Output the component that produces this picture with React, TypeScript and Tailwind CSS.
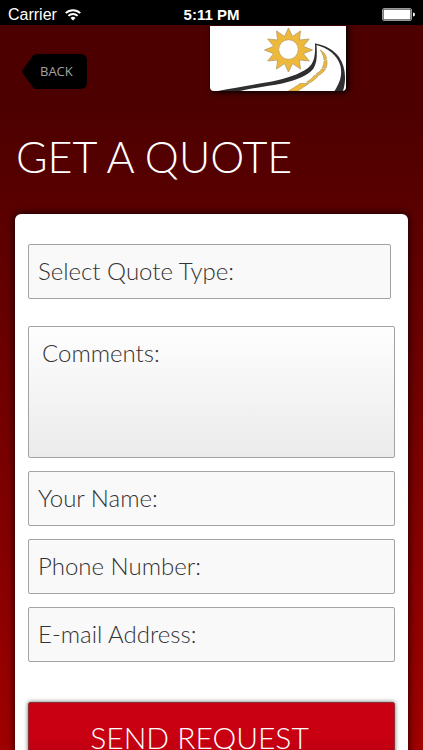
import { useState } from 'react';
import type { FormEvent } from 'react';

const quoteTypes = ['Residential', 'Commercial', 'Paving', 'Other'];

const contactFields = [
  { id: 'name', label: 'Your Name:', type: 'text' },
  { id: 'phone', label: 'Phone Number:', type: 'tel' },
  { id: 'email', label: 'E-mail Address:', type: 'email' },
];

const fieldClass =
  'block w-full rounded-xs border border-[#a3a3a3] text-2xl font-light text-[#333] placeholder:text-[#333] placeholder:opacity-100';

function WifiIcon() {
  return (
    <svg viewBox="0 0 16 12" className="h-3 w-4" fill="none" stroke="white" strokeWidth="1.9">
      <path d="M0.8 4.2a10.2 10.2 0 0 1 14.4 0" />
      <path d="M3.4 6.9a6.5 6.5 0 0 1 9.2 0" />
      <path d="M8 11.6 5.5 9.1a3.5 3.5 0 0 1 5 0z" fill="white" stroke="none" />
    </svg>
  );
}

function StatusBar() {
  return (
    <div className="grid h-[25px] shrink-0 grid-cols-3 items-center bg-black px-2 pt-1 font-['Liberation_Sans',sans-serif] text-base leading-5 text-white">
      <div className="flex items-center gap-2">
        <span>Carrier</span>
        <WifiIcon />
      </div>
      <span className="text-center text-[15px] font-bold">5:11 PM</span>
      <svg viewBox="0 0 33 14" className="h-3.5 w-[33px] justify-self-end">
        <rect x="0.5" y="0.5" width="29" height="12" rx="1.5" fill="none" stroke="#999" />
        <rect x="1.5" y="1.5" width="27" height="10" rx="0.5" fill="white" />
        <path d="M31 4.5a2 2 0 0 1 0 4z" fill="white" />
      </svg>
    </div>
  );
}

// Sun rising over a winding road
function Logo() {
  const rays = Array.from({ length: 24 }, (_, i) => {
    const angle = (i * Math.PI) / 12;
    const r = i % 2 === 0 ? 1 : 0.64;
    return `${78.5 + Math.sin(angle) * 24 * r},${24 - Math.cos(angle) * 22 * r}`;
  }).join(' ');

  return (
    <svg
      viewBox="0 0 136 65"
      className="mt-px h-[65px] w-[136px] rounded-b-sm bg-white shadow-[2px_1px_5px_1px_rgba(0,0,0,0.8)]"
      role="img"
      aria-label="Logo"
    >
      <polygon points={rays} fill="#eeb93a" stroke="#b59a63" strokeWidth="0.8" />
      <circle cx="78.5" cy="23.5" r="9.8" fill="white" stroke="#b59a63" strokeWidth="0.7" />
      <g fill="#2f2f31">
        <path d="M105 17.5C105.500 30 104 37 98 42C88 49 77 52 62 55.500C42 59 24 62 8 65H30C45 61.500 60 60 72 57.500C88 53.500 99 49 103.500 42.500C107.500 36 107 28 106.500 18Z" />
        <path d="M105 17.5C115 19 124 24 129 31C135 40 137 52 133 65H124.500C129.500 57 132.500 50 130.500 40C127.500 30 119 22 105.500 18.800Z" />
      </g>
      <g fill="#eeb93a" stroke="#a88b50" strokeWidth="0.6">
        <path d="M110 24C112.500 27 113.500 30 114 34L116.500 33C116.500 29.500 114 26 110 24Z" />
        <path d="M114 35.200L116.800 34.200C117.300 37 117 39.500 116 42L112.300 41.500C113.500 39.500 114 37.500 114 35.200Z" />
        <path d="M111.700 42.800L115.500 43C114 45.500 112 47 109.500 49L106 48C108.500 46.500 110.500 45 111.700 42.800Z" />
        <path d="M104.500 49.200L108.500 49.800C106 52.500 103.500 54.500 100.500 56.500L96.500 56C99.500 54.500 102.500 52 104.500 49.200Z" />
        <path d="M90 57.500H99C95 60 91 62.500 88 65H78.500C83 62 87 60 90 57.500Z" />
      </g>
    </svg>
  );
}

function BackButton() {
  return (
    <button
      type="button"
      className="mt-[29px] flex h-[35px] items-stretch font-['Open_Sans',sans-serif] text-[13px] text-[#a3a3a3]"
    >
      <svg viewBox="0 0 14 35" className="h-full w-3.5" fill="black">
        <path d="M15 0H14Q12.500 0 11 1.500L1 15.500Q-0.500 17.500 1 19.500L11 33.500Q12.500 35 14 35H15Z" />
      </svg>
      <span className="flex items-center rounded-r-md bg-black pr-3.5 pl-1">BACK</span>
    </button>
  );
}

export default function App() {
  const [quoteType, setQuoteType] = useState('');

  const handleSubmit = (e: FormEvent) => {
    e.preventDefault();
  };

  return (
    <div className="flex h-screen flex-col overflow-hidden bg-black font-['Lato',sans-serif]">
      <StatusBar />
      <main className="grow overflow-y-auto bg-linear-to-b from-[#4c0000] from-10% to-[#a00000] [scrollbar-width:none]">
        <header className="flex items-start justify-between pr-[77px] pl-[22px]">
          <BackButton />
          <Logo />
        </header>

        <h1 className="mt-10 pl-4 text-[43px] leading-[52px] font-light text-white">GET A QUOTE</h1>

        <form
          onSubmit={handleSubmit}
          className="mx-[15px] mt-[31px] rounded-md bg-white px-[13px] pt-[30px] pb-8 shadow-[0_0_7px_1px_rgba(0,0,0,0.7)]"
        >
          <div className="mb-[27px] pr-1">
            <select
              aria-label="Select Quote Type"
              value={quoteType}
              onChange={(e) => setQuoteType(e.target.value)}
              className={`${fieldClass} h-[55px] appearance-none bg-[#f9f9f9] px-[9px] pb-0.5`}
            >
              <option value="">Select Quote Type:</option>
              {quoteTypes.map((type) => (
                <option key={type} value={type}>
                  {type}
                </option>
              ))}
            </select>
          </div>

          <div className="flex flex-col gap-[13px]">
            <textarea
              aria-label="Comments"
              placeholder="Comments:"
              className={`${fieldClass} h-[132px] resize-none bg-linear-to-b from-[#fefefe] to-[#ebebeb] px-[13px] py-2.5`}
            />
            {contactFields.map((field) => (
              <input
                key={field.id}
                id={field.id}
                type={field.type}
                aria-label={field.label}
                placeholder={field.label}
                className={`${fieldClass} h-[55px] bg-[#f9f9f9] px-[9px] pb-0.5`}
              />
            ))}
          </div>

          <button
            type="submit"
            className="mt-10 h-[74px] w-full rounded-xs border border-[#8c3038] bg-linear-to-b from-[#c90012] from-45% to-[#b0000f] pr-6 pb-1 text-3xl font-light text-white shadow-[0_0_4px_0_rgba(0,0,0,0.6)]"
          >
            SEND REQUEST
          </button>
        </form>
      </main>
    </div>
  );
}
